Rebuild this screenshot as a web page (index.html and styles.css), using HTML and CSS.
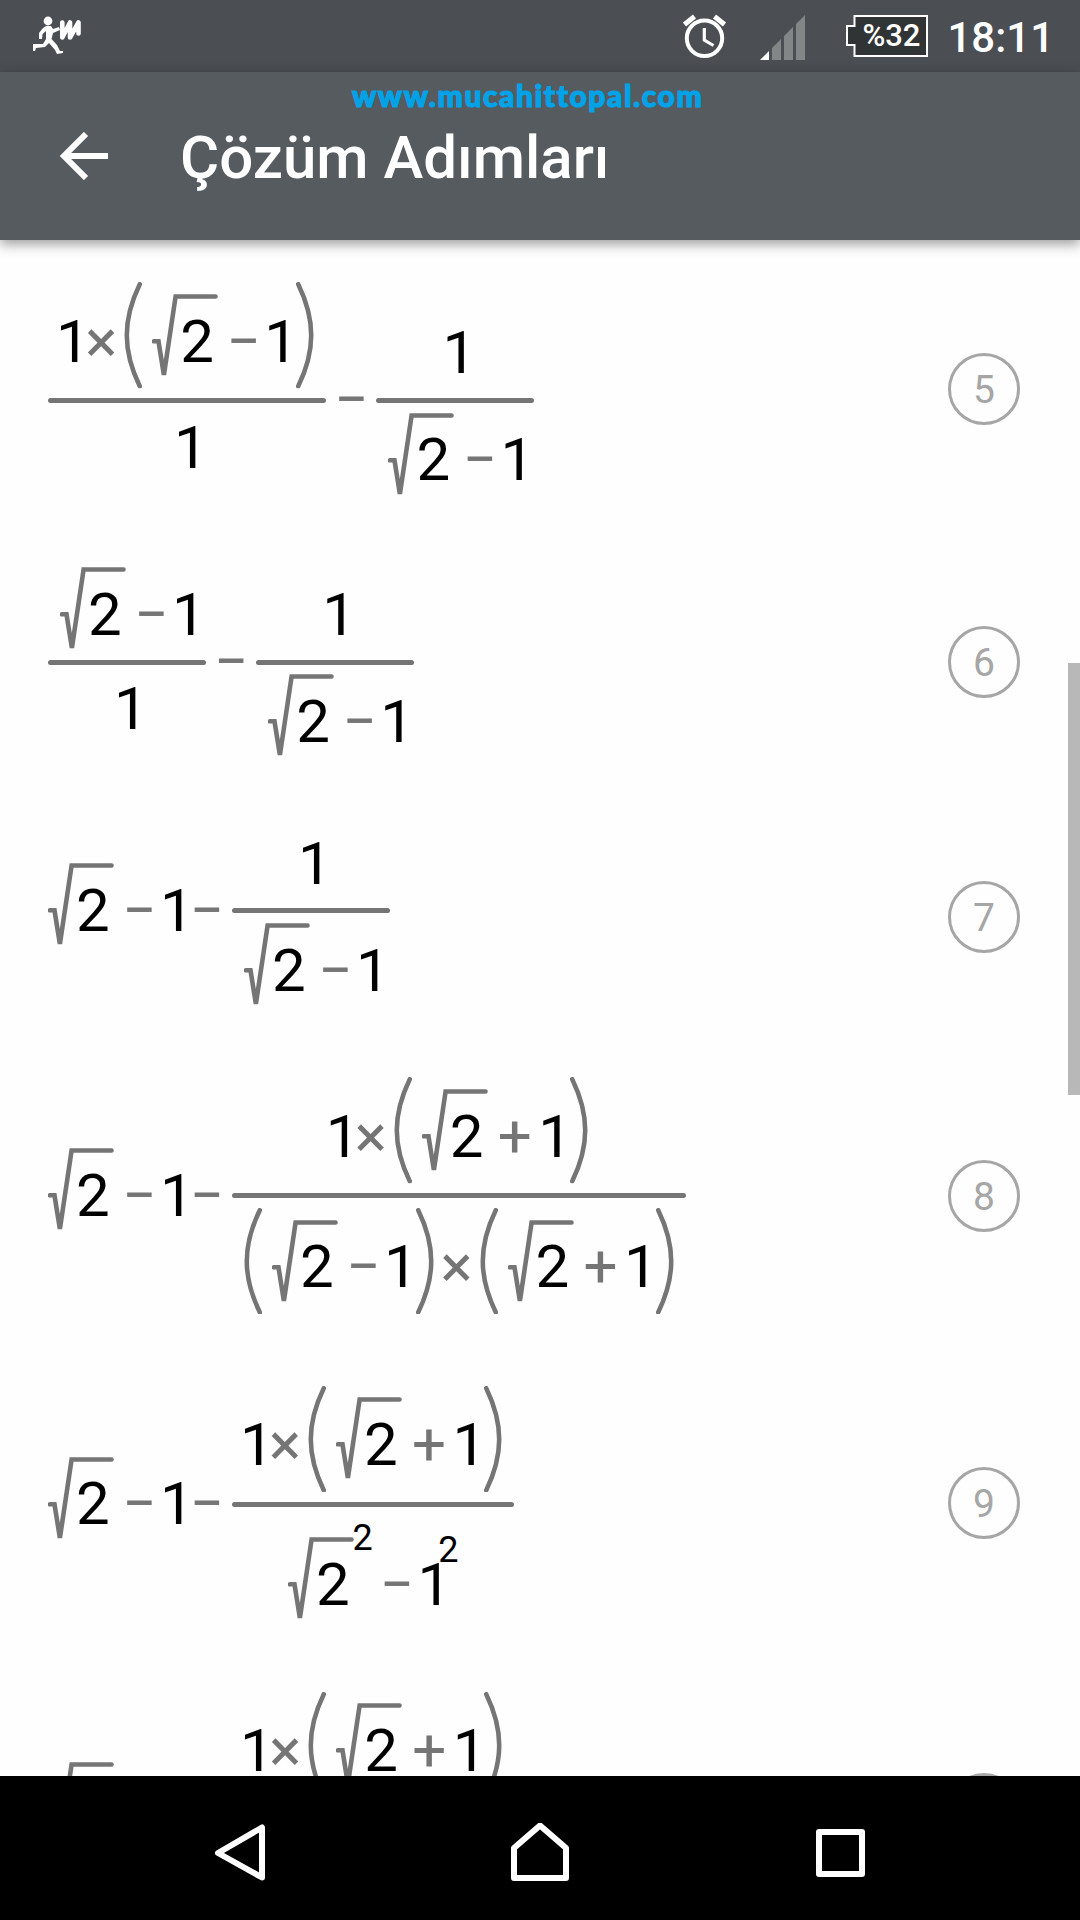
FILE: index.html
```html
<!DOCTYPE html>
<html lang="tr">
<head>
  <meta charset="UTF-8" />
  <title>Çözüm Adımları</title>
  <link rel="stylesheet" href="styles.css">
</head>
<body>

  <!-- Shared math shapes -->
  <svg class="defs" width="0" height="0">
    <symbol id="radical" viewBox="0 0 66 83">
      <path d="M2 47.3H6.5L11.9 81L23.6 2.5H63.5" />
    </symbol>
    <symbol id="open" viewBox="0 0 18 107">
      <path d="M15.8 2.2C-1.6 38 -1.6 69 15.8 104.8" />
    </symbol>
    <symbol id="close" viewBox="0 0 18 107">
      <path d="M2.2 2.2C19.6 38 19.6 69 2.2 104.8" />
    </symbol>
  </svg>

  <!-- STATUS BAR -->
  <div class="status-bar">
    <svg class="runner" width="50" height="38" viewBox="0 0 50 38">
      <circle cx="15" cy="5" r="4.4" fill="#fff" />
      <path d="M13 10H18L20 13L26 11L27 14L20 17L18.5 23L24 29L27 35L30 35V37L24 38L22 34L16 27L12 31L3 32L2 35H0V28L10 28L13 23L13 15L9.5 18L9 23H6V17L10 12Z" fill="#fff" />
      <path d="M29.300 6.500V21.500L37 6.500V21.500L45.500 6.500V17.500" fill="none" stroke="#fff" stroke-width="4.600" stroke-linejoin="round" stroke-linecap="round" />
    </svg>

    <div class="status-right">
      <svg class="alarm" width="44" height="46" viewBox="0 0 44 46" fill="none" stroke="#fff">
        <circle cx="21.5" cy="24.3" r="17.7" stroke-width="4" />
        <path d="M21.3 14V26L30.5 31.5" stroke-width="3.2" />
        <path d="M1.5 10.5L11.5 2.5M31.5 2.5L41.5 10.5" stroke-width="5" />
      </svg>
      <svg class="signal" width="45" height="45" viewBox="0 0 45 45">
        <path d="M0 45L9 36V45Z" fill="#fff" />
        <path d="M12 33L21 24V45H12ZM24 21L33 12V45H24ZM36 9L45 0V45H36Z" fill="#838686" />
      </svg>
      <div class="battery">
        <svg width="82" height="42" viewBox="0 0 82 42">
          <path d="M8.5 1H81V41H8.5V30H1V11H8.5Z" fill="#313435" stroke="#fff" stroke-width="2" />
        </svg>
        <span class="battery-level">%32</span>
      </div>
      <span class="clock">18:11</span>
    </div>
  </div>

  <!-- TOOLBAR -->
  <div class="toolbar">
    <div class="watermark">www.mucahittopal.com</div>
    <div class="toolbar-row">
      <svg class="back" width="48" height="48" viewBox="0 0 48 48">
        <path d="M26 2L4 24L26 46M4 24H48" fill="none" stroke="#fff" stroke-width="6" />
      </svg>
      <h1 class="title">Çözüm Adımları</h1>
    </div>
  </div>

  <!-- SOLUTION STEPS -->
  <div class="steps">

    <!-- 5 -->
    <div class="step">
      <div class="expr axis-tall">
        <div class="frac num-tall">
          <div class="row starts-digit tall">
            <span class="n">1</span><span class="op times">×</span>
            <svg class="paren"><use href="#open" /></svg>
            <span class="root"><svg><use href="#radical" /></svg><span class="n">2</span></span>
            <span class="op minus">−</span><span class="n">1</span>
            <svg class="paren close"><use href="#close" /></svg>
          </div>
          <div class="bar"></div>
          <div class="row single"><span class="n">1</span></div>
        </div>
        <span class="op minus between">−</span>
        <div class="frac num-digit">
          <div class="row single"><span class="n">1</span></div>
          <div class="bar"></div>
          <div class="row">
            <span class="root"><svg><use href="#radical" /></svg><span class="n">2</span></span>
            <span class="op minus">−</span><span class="n">1</span>
          </div>
        </div>
      </div>
      <div class="badge">5</div>
    </div>

    <!-- 6 -->
    <div class="step">
      <div class="expr axis-root">
        <div class="frac num-root">
          <div class="row">
            <span class="root"><svg><use href="#radical" /></svg><span class="n">2</span></span>
            <span class="op minus">−</span><span class="n">1</span>
          </div>
          <div class="bar"></div>
          <div class="row single"><span class="n">1</span></div>
        </div>
        <span class="op minus between">−</span>
        <div class="frac num-digit">
          <div class="row single"><span class="n">1</span></div>
          <div class="bar"></div>
          <div class="row">
            <span class="root"><svg><use href="#radical" /></svg><span class="n">2</span></span>
            <span class="op minus">−</span><span class="n">1</span>
          </div>
        </div>
      </div>
      <div class="badge">6</div>
    </div>

    <!-- 7 -->
    <div class="step">
      <div class="expr axis-digit">
        <div class="lead">
          <span class="root"><svg><use href="#radical" /></svg><span class="n">2</span></span>
          <span class="op minus">−</span><span class="n">1</span><span class="op minus last">−</span>
        </div>
        <div class="frac num-digit">
          <div class="row single"><span class="n">1</span></div>
          <div class="bar"></div>
          <div class="row">
            <span class="root"><svg><use href="#radical" /></svg><span class="n">2</span></span>
            <span class="op minus">−</span><span class="n">1</span>
          </div>
        </div>
      </div>
      <div class="badge">7</div>
    </div>

    <!-- 8 -->
    <div class="step">
      <div class="expr axis-tall">
        <div class="lead">
          <span class="root"><svg><use href="#radical" /></svg><span class="n">2</span></span>
          <span class="op minus">−</span><span class="n">1</span><span class="op minus last">−</span>
        </div>
        <div class="frac num-tall">
          <div class="row starts-digit tall">
            <span class="n">1</span><span class="op times">×</span>
            <svg class="paren"><use href="#open" /></svg>
            <span class="root"><svg><use href="#radical" /></svg><span class="n">2</span></span>
            <span class="op plus">+</span><span class="n">1</span>
            <svg class="paren close"><use href="#close" /></svg>
          </div>
          <div class="bar"></div>
          <div class="row tall">
            <svg class="paren first"><use href="#open" /></svg>
            <span class="root"><svg><use href="#radical" /></svg><span class="n">2</span></span>
            <span class="op minus">−</span><span class="n">1</span>
            <svg class="paren close"><use href="#close" /></svg>
            <span class="op times after-paren">×</span>
            <svg class="paren"><use href="#open" /></svg>
            <span class="root"><svg><use href="#radical" /></svg><span class="n">2</span></span>
            <span class="op plus">+</span><span class="n">1</span>
            <svg class="paren close"><use href="#close" /></svg>
          </div>
        </div>
      </div>
      <div class="badge">8</div>
    </div>

    <!-- 9 -->
    <div class="step">
      <div class="expr axis-tall">
        <div class="lead">
          <span class="root"><svg><use href="#radical" /></svg><span class="n">2</span></span>
          <span class="op minus">−</span><span class="n">1</span><span class="op minus last">−</span>
        </div>
        <div class="frac num-tall">
          <div class="row starts-digit tall">
            <span class="n">1</span><span class="op times">×</span>
            <svg class="paren"><use href="#open" /></svg>
            <span class="root"><svg><use href="#radical" /></svg><span class="n">2</span></span>
            <span class="op plus">+</span><span class="n">1</span>
            <svg class="paren close"><use href="#close" /></svg>
          </div>
          <div class="bar"></div>
          <div class="row powers">
            <span class="root"><svg><use href="#radical" /></svg><span class="n">2</span></span>
            <span class="exp exp-root">2</span>
            <span class="op minus">−</span><span class="n">1</span>
            <span class="exp exp-digit">2</span>
          </div>
        </div>
      </div>
      <div class="badge">9</div>
    </div>

    <!-- 10, runs below the fold -->
    <div class="step">
      <div class="expr axis-tall">
        <div class="lead">
          <span class="root"><svg><use href="#radical" /></svg></span>
        </div>
        <div class="frac num-tall last-frac">
          <div class="row starts-digit tall">
            <span class="n">1</span><span class="op times">×</span>
            <svg class="paren"><use href="#open" /></svg>
            <span class="root"><svg><use href="#radical" /></svg><span class="n">2</span></span>
            <span class="op plus">+</span><span class="n">1</span>
            <svg class="paren close"><use href="#close" /></svg>
          </div>
          <div class="bar"></div>
          <div class="row powers"></div>
        </div>
      </div>
      <div class="badge"></div>
    </div>

    <div class="scrollbar"></div>
  </div>

  <!-- NAVIGATION BAR -->
  <div class="nav-bar">
    <svg width="60" height="60" viewBox="0 0 60 60"><path d="M8 30L52 4.5V54.5Z" /></svg>
    <svg width="60" height="60" viewBox="0 0 60 60"><path d="M4 55V25L30 2.5L56 25V55Z" /></svg>
    <svg width="60" height="60" viewBox="0 0 60 60"><path d="M9 9H52V51H9Z" /></svg>
  </div>

</body>
</html>
```
FILE: styles.css
```css
body {
  margin: 0;
  width: 1080px;
  height: 1920px;
  display: flex;
  flex-direction: column;
  overflow: hidden;
  background: #fefefe;
  font-family: Roboto, sans-serif;
}

svg {
  display: block;
  flex: none;
}

.defs {
  position: absolute;
}

/* Status bar */
.status-bar {
  flex: none;
  height: 72px;
  display: flex;
  justify-content: space-between;
  background: #4b4e53;
  color: #fff;
}

.runner {
  margin: 16px 0 0 33px;
}

.status-right {
  display: flex;
  align-items: flex-start;
  padding-right: 26px;
}

.alarm {
  margin: 14px 33px 0 0;
}

.signal {
  margin: 15px 41px 0 0;
}

.battery {
  position: relative;
  margin: 15px 19px 0 0;
}

/* Level text lies over the battery outline */
.battery-level {
  position: absolute;
  left: 9px;
  right: 1px;
  top: 0;
  line-height: 41px;
  text-align: center;
  font-size: 31px;
  font-weight: 500;
}

.clock {
  font-size: 42px;
  font-weight: 500;
  line-height: 75px;
}

/* Toolbar */
.toolbar {
  flex: none;
  height: 168px;
  background: #565b5f;
  color: #fff;
  box-shadow: 0 4px 12px rgba(0, 0, 0, 0.4);
  z-index: 1;
}

.watermark {
  height: 48px;
  padding-left: 352px;
  line-height: 47px;
  color: #00a2e8;
  font-family: Lato, sans-serif;
  font-size: 30px;
  font-weight: 900;
  letter-spacing: 1.55px;
  -webkit-text-stroke: 1.2px #00a2e8;
  white-space: nowrap;
}

.toolbar-row {
  display: flex;
  align-items: center;
  height: 72px;
  padding-left: 60px;
}

.title {
  margin: 3px 0 0 72px;
  font-size: 60px;
  font-weight: 500;
  line-height: 72px;
}

/* List of steps */
.steps {
  position: relative;
  flex: 1;
  min-height: 0;
  padding-top: 6.3px;
  overflow: hidden;
}

.step {
  display: flex;
  align-items: center;
  justify-content: space-between;
  padding: 36px 60px 35.5px 48px;
}

.badge {
  box-sizing: border-box;
  width: 72px;
  height: 72px;
  border: 3px solid #a6a6a6;
  border-radius: 50%;
  color: #a6a6a6;
  font-size: 39px;
  line-height: 68px;
  text-align: center;
}

.scrollbar {
  position: absolute;
  right: 0;
  top: 423px;
  width: 12px;
  height: 432px;
  background: #b8b8b8;
}

/* Math: --axis is where the fraction bar of an expression sits,
   --num is the height above the bar inside one fraction */
.expr {
  display: flex;
  align-items: flex-start;
}

.axis-tall { --axis: 118.4px; }
.axis-root { --axis: 95px; }
.axis-digit { --axis: 82.3px; }

.num-tall { --num: 118.4px; }
.num-root { --num: 95px; }
.num-digit { --num: 82.3px; }

.frac {
  display: flex;
  flex-direction: column;
  align-items: center;
  margin-top: calc(var(--axis) - var(--num));
}

.last-frac {
  margin-left: 118.5px;
}

.bar {
  align-self: stretch;
  height: 5px;
  margin: 9.5px 0;
  border-radius: 3px;
  background: #757575;
}

.row,
.lead {
  display: flex;
  align-items: flex-end;
  height: 83px;
}

.row {
  padding-left: 12px;
}

.row.single {
  height: 70.3px;
  padding-left: 8px;
}

.row.tall {
  padding: 11.7px 12px;
}

.row.starts-digit {
  padding-left: 8px;
}

.lead {
  margin-top: calc(var(--axis) - 47.5px);
}

.n,
.op {
  font-size: 60px;
  line-height: 70.3px;
}

.n {
  width: 33.7px;
  color: #000;
}

.op {
  display: flex;
  justify-content: center;
  color: #757575;
}

.minus {
  width: 25px;
  margin: 0 8px 0 13.5px;
}

.minus.last {
  margin: 0 12.5px 0 0.7px;
}

.minus.between {
  margin: calc(var(--axis) - 35.2px) 12.5px 0 13px;
}

.plus {
  width: 30px;
  margin: 0 8.5px 0 12.5px;
}

.times {
  width: 26px;
  margin-left: -1.5px;
}

.times.after-paren {
  margin-left: 10px;
}

.paren {
  width: 18px;
  height: 106.4px;
  margin: 0 10px -11.7px 10px;
}

.paren.first {
  margin-left: 0;
}

.paren.close {
  margin: 0 0 -11.7px -2px;
}

.root {
  display: flex;
  align-items: flex-end;
  width: 65.5px;
}

.root svg {
  width: 66px;
  height: 83px;
  margin-right: -38px;
}

symbol path {
  fill: none;
  stroke: #757575;
  stroke-width: 4.6px;
  stroke-linecap: round;
}

/* Powers hang above the root and the digit */
.row.powers {
  height: 104px;
  padding-left: 0;
}

.exp {
  font-size: 36px;
  line-height: 42px;
  color: #000;
}

.exp-root {
  width: 20px;
  margin: 0 -1.5px 61px -1px;
}

.exp-digit {
  width: 20px;
  margin: 0 0 49px -13px;
}

/* Navigation bar */
.nav-bar {
  flex: none;
  box-sizing: border-box;
  height: 144px;
  display: flex;
  align-items: center;
  justify-content: center;
  gap: 240px;
  padding-top: 10px;
  background: #000;
}

.nav-bar path {
  fill: none;
  stroke: #fff;
  stroke-width: 6px;
  stroke-linejoin: round;
}
```
